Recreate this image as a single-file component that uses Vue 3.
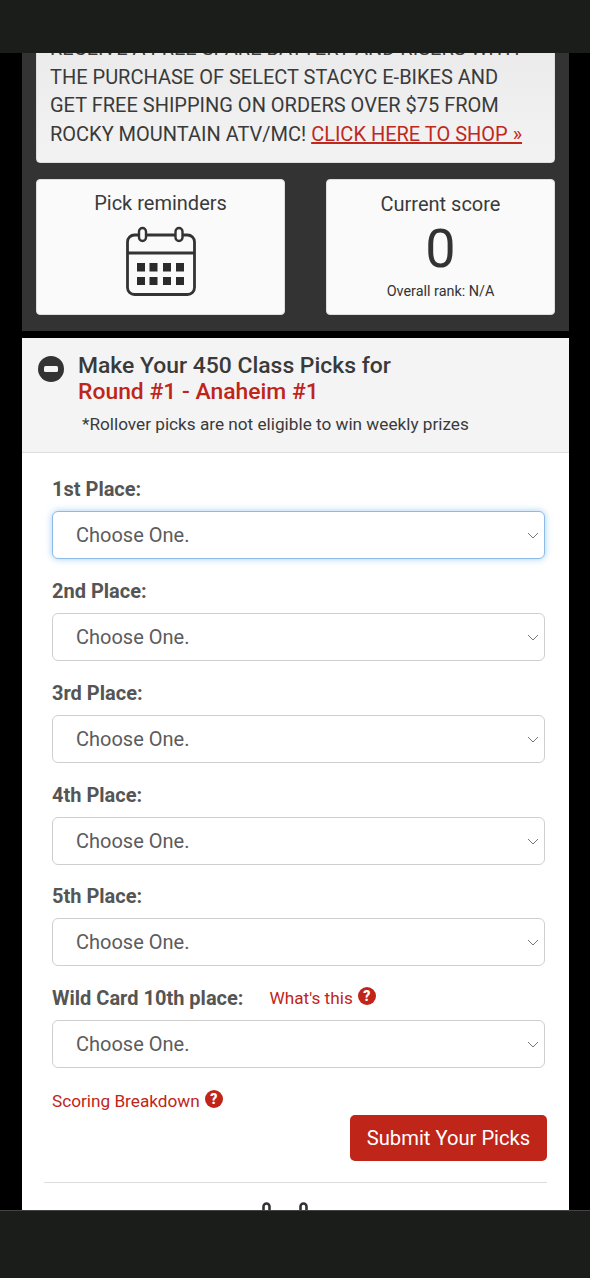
<script setup>
  const places = [
    { id: "first", label: "1st Place:" },
    { id: "second", label: "2nd Place:" },
    { id: "third", label: "3rd Place:" },
    { id: "fourth", label: "4th Place:" },
    { id: "fifth", label: "5th Place:" },
    { id: "wild", label: "Wild Card 10th place:", help: "What's this" }
  ]
</script>

<template>
  <div class="screen">
    <div class="system-bar"></div>

    <div class="viewport">
      <div class="page">
        <section class="top">
          <div class="promo">
            RECEIVE A FREE SPARE BATTERY AND RISERS WITH THE PURCHASE OF SELECT STACYC E-BIKES AND
            GET FREE SHIPPING ON ORDERS OVER $75 FROM ROCKY MOUNTAIN ATV/MC!
            <a href="#">CLICK HERE TO SHOP »</a>
          </div>
          <div class="cards">
            <div class="card reminders">
              <div class="card-title">Pick reminders</div>
              <svg class="calendar" viewBox="0 0 70 70">
                <rect x="1.5" y="9" width="67" height="59.5" rx="7" fill="none" stroke="#333" stroke-width="2.8" />
                <line x1="1.5" y1="27" x2="68.5" y2="27" stroke="#333" stroke-width="2.8" />
                <rect x="13" y="2" width="7" height="13" rx="3.5" fill="#fafafa" stroke="#333" stroke-width="2.4" />
                <rect x="49.5" y="2" width="7" height="13" rx="3.5" fill="#fafafa" stroke="#333" stroke-width="2.4" />
                <g fill="#2b2b2b">
                  <rect x="11" y="37" width="8" height="8.5" />
                  <rect x="23.5" y="37" width="8" height="8.5" />
                  <rect x="37" y="37" width="8" height="8.5" />
                  <rect x="50" y="37" width="8" height="8.5" />
                  <rect x="11" y="51" width="8" height="8" />
                  <rect x="23.5" y="51" width="8" height="8" />
                  <rect x="37" y="51" width="8" height="8" />
                  <rect x="50" y="51" width="8" height="8" />
                </g>
              </svg>
            </div>
            <div class="card score">
              <div class="card-title">Current score</div>
              <div class="score-value">0</div>
              <div class="rank">Overall rank: N/A</div>
            </div>
          </div>
        </section>

        <section class="picks">
          <header class="picks-head">
            <div class="head-row">
              <span class="collapse"><span class="minus"></span></span>
              <h2>Make Your 450 Class Picks for<br /><em>Round #1 - Anaheim #1</em></h2>
            </div>
            <p class="note">*Rollover picks are not eligible to win weekly prizes</p>
          </header>

          <form class="picks-form" @submit.prevent>
            <div v-for="(place, ind) in places" :key="place.id" class="field">
              <div class="label-row">
                <label :for="place.id">{{ place.label }}</label>
                <a v-if="place.help" href="#" class="help wild-help">
                  {{ place.help }}
                  <span class="q">?</span>
                </a>
              </div>
              <div class="select-wrap">
                <select :id="place.id" :class="{ focused: ind === 0 }">
                  <option>Choose One.</option>
                </select>
                <svg class="chevron" viewBox="0 0 12 7">
                  <path d="M1 1l5 5 5-5" fill="none" stroke="#777" stroke-width="1" />
                </svg>
              </div>
            </div>

            <a href="#" class="help scoring">
              Scoring Breakdown
              <span class="q">?</span>
            </a>
            <div class="actions">
              <button type="submit">Submit Your Picks</button>
            </div>
          </form>

          <hr />
          <svg class="peek" viewBox="0 0 46 12">
            <rect x="1.5" y="1.5" width="6" height="20" rx="3" fill="#fff" stroke="#333" stroke-width="2.6" />
            <rect x="38.5" y="1.5" width="6" height="20" rx="3" fill="#fff" stroke="#333" stroke-width="2.6" />
          </svg>
        </section>
      </div>
    </div>

    <div class="nav-bar"></div>
  </div>
</template>

<style>
  html,
  body {
    margin: 0;
    background: #000;
  }
</style>

<style scoped>
  .screen {
    display: flex;
    flex-direction: column;
    height: 1278px;
    width: 590px;
    overflow: hidden;
    background: #000;
    font-family: Roboto, "Liberation Sans", sans-serif;
    color: #333;
  }

  .system-bar {
    height: 53px;
    flex: none;
    background: #1b1d1b;
  }

  .nav-bar {
    height: 67px;
    flex: none;
    background: #1b1d1b;
    border-top: 1px solid #444;
  }

  .viewport {
    flex: 1;
    min-height: 0;
    overflow: hidden;
  }

  /* the page is scrolled, first promo line is cut by the top bar */
  .page {
    margin: -52px 21px 0 22px;
  }

  .top {
    background: #333;
    padding: 24px 14px 16px;
  }

  .promo {
    box-sizing: border-box;
    height: 138px;
    padding: 8px 25px 0 13px;
    background: linear-gradient(#e9e9e9, #f3f3f3);
    border: 1px solid #ddd;
    border-radius: 4px;
    font-size: 20px;
    line-height: 28.7px;
    color: #3a3a3a;
  }

  .promo a {
    color: #c1281d;
  }

  .cards {
    display: flex;
    justify-content: space-between;
    margin-top: 16px;
  }

  .card {
    box-sizing: border-box;
    height: 136px;
    background: #fafafa;
    border: 1px solid #ddd;
    border-radius: 4px;
    text-align: center;
  }

  .reminders {
    width: 249px;
    padding-top: 11px;
  }

  .reminders .calendar {
    margin-top: 11px;
  }

  .score {
    width: 229px;
    padding-top: 12px;
  }

  .card-title {
    font-size: 20px;
    line-height: 24px;
    color: #3a3a3a;
  }

  .calendar {
    display: block;
    width: 70px;
    height: 70px;
    margin: 10px auto 0;
  }

  .score-value {
    font-size: 54px;
    line-height: 56px;
    margin-top: 5px;
  }

  .rank {
    font-size: 14.4px;
    line-height: 20px;
    margin-top: 5px;
  }

  .picks {
    margin-top: 7px;
    background: #fff;
    padding-bottom: 40px;
  }

  .picks-head {
    box-sizing: border-box;
    height: 115px;
    padding: 15px 16px 0;
    background: #f4f4f4;
    border-bottom: 1px solid #ddd;
  }

  .head-row {
    display: flex;
    gap: 14px;
  }

  .collapse {
    display: flex;
    align-items: center;
    justify-content: center;
    flex: none;
    width: 26px;
    height: 26px;
    margin-top: 3px;
    border-radius: 50%;
    background: #333;
  }

  .minus {
    width: 14px;
    height: 6px;
    border-radius: 1.5px;
    background: #f4f4f4;
  }

  h2 {
    margin: 0;
    font-size: 22.9px;
    line-height: 26px;
    font-weight: 500;
    color: #3a3a3a;
  }

  h2 em {
    font-style: normal;
    color: #bf2519;
  }

  .note {
    margin: 8px 0 0 44px;
    font-size: 17.2px;
    line-height: 22px;
    color: #3a3a3a;
  }

  .picks-form {
    padding: 24px 24px 0 30px;
  }

  .field {
    height: 101.85px;
  }

  .label-row {
    display: flex;
    align-items: center;
    height: 24px;
    margin-bottom: 10px;
  }

  label {
    font-size: 20px;
    font-weight: 700;
    color: #555;
  }

  .select-wrap {
    position: relative;
  }

  select {
    display: block;
    box-sizing: border-box;
    width: 100%;
    height: 48px;
    padding: 0 0 0 23px;
    appearance: none;
    background: #fff;
    border: 1.5px solid #cfcfcf;
    border-radius: 6px;
    font-family: inherit;
    font-size: 20px;
    color: #5c5c5c;
    outline: none;
  }

  select.focused {
    border-color: #8dbbe8;
    box-shadow: 0 0 7px rgba(102, 175, 233, 0.6);
  }

  .chevron {
    position: absolute;
    right: 6px;
    top: 21px;
    width: 12px;
    height: 7px;
    pointer-events: none;
  }

  .help {
    display: inline-flex;
    align-items: center;
    gap: 5px;
    font-size: 17.2px;
    color: #bf2519;
    text-decoration: none;
  }

  .wild-help {
    margin-left: 26px;
  }

  .q {
    display: inline-flex;
    align-items: center;
    justify-content: center;
    width: 18px;
    height: 18px;
    margin-top: -4px;
    border-radius: 50%;
    background: #bf2519;
    color: #fff;
    font-size: 14px;
    font-weight: 900;
  }

  .scoring {
    display: flex;
    height: 24px;
    margin-top: 1px;
  }

  .actions {
    display: flex;
    justify-content: flex-end;
    margin: 2px -2px 0 0;
  }

  button {
    width: 197px;
    height: 46px;
    border: none;
    border-radius: 5px;
    background: #bf2519;
    color: #fff;
    font-family: inherit;
    font-size: 20.2px;
  }

  hr {
    height: 1px;
    margin: 21px 22px 0;
    border: none;
    background: #ddd;
  }

  .peek {
    display: block;
    width: 46px;
    height: 12px;
    margin: 19px 0 0 240px;
  }
</style>
